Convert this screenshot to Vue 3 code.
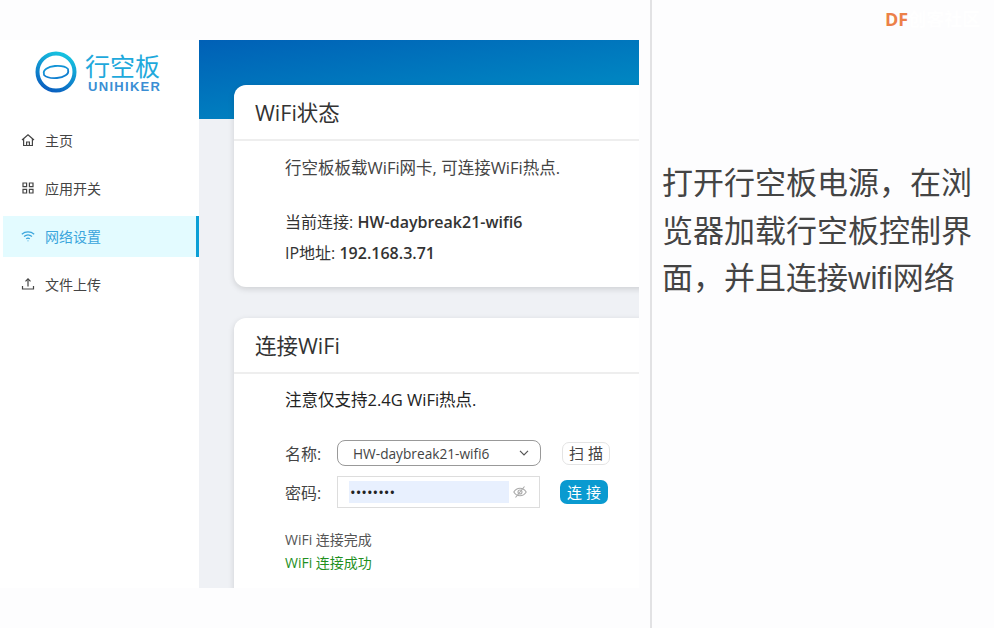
<template>
  <div class="page">
    <div class="app">
      <aside class="sidebar">
        <div class="logo">
          <svg class="logo-mark" width="44" height="44" viewBox="0 0 44 44" fill="none">
            <defs>
              <linearGradient id="ring" x1="0.7" y1="0" x2="0.3" y2="1">
                <stop offset="0" stop-color="#17c3e0" />
                <stop offset="1" stop-color="#0a5fc0" />
              </linearGradient>
            </defs>
            <circle cx="22" cy="22" r="18.5" stroke="url(#ring)" stroke-width="4" />
            <path d="M10 24c-1.500-4 4-7.500 11-8 6-.4 11 .8 13 3" stroke="#1293d6" stroke-width="1.800" stroke-linecap="round" />
            <path d="M34 20c1.500 4-4 7.500-11 8-6 .4-11-.8-13-3" stroke="#0f7fd0" stroke-width="1.800" stroke-linecap="round" />
          </svg>
          <div class="logo-text">
            <span class="logo-cn">行空板</span>
            <span class="logo-en">UNIHIKER</span>
          </div>
        </div>
        <nav class="nav">
          <div v-for="item in navItems" :key="item.label" class="nav-item" :class="{ active: item.active }">
            <svg class="nav-icon" width="14" height="14" viewBox="0 0 14 14" fill="none" stroke="currentColor" stroke-width="1.200">
              <path v-for="d in item.paths" :key="d" :d="d" />
            </svg>
            <span>{{ item.label }}</span>
          </div>
        </nav>
      </aside>

      <main class="main">
        <section class="card status-card">
          <h2 class="card-title">WiFi状态</h2>
          <div class="card-body">
            <p class="intro">行空板板载WiFi网卡, 可连接WiFi热点.</p>
            <p class="info">当前连接: <b>HW-daybreak21-wifi6</b></p>
            <p class="info">IP地址: <b>192.168.3.71</b></p>
          </div>
        </section>

        <section class="card connect-card">
          <h2 class="card-title">连接WiFi</h2>
          <div class="card-body">
            <p class="intro strong">注意仅支持2.4G WiFi热点.</p>
            <div class="form">
              <label>名称:</label>
              <div class="select">
                <span>HW-daybreak21-wifi6</span>
                <svg width="10" height="6" viewBox="0 0 10 6" fill="none" stroke="#555" stroke-width="1.200"><path d="M1 .8l4 4 4-4" /></svg>
              </div>
              <button class="btn">扫 描</button>
              <label>密码:</label>
              <div class="password">
                <span class="dots">••••••••</span>
                <svg width="14" height="14" viewBox="0 0 14 14" fill="none" stroke="#aaa" stroke-width="1.100">
                  <path d="M.8 7C2.300 4.500 4.500 3.200 7 3.200s4.700 1.300 6.200 3.800c-1.500 2.500-3.700 3.800-6.200 3.800S2.300 9.500.8 7z" />
                  <circle cx="7" cy="7" r="2" />
                  <path d="M2.500 12.500L11.500 1.500" />
                </svg>
              </div>
              <button class="btn primary">连 接</button>
            </div>
            <p class="log">WiFi 连接完成</p>
            <p class="log success">WiFi 连接成功</p>
          </div>
        </section>
      </main>
    </div>

    <div class="divider"></div>

    <div class="side">
      <div class="brand">
        <span class="brand-df">DF</span><span class="brand-rest">创客社区</span>
      </div>
      <p class="caption">打开行空板电源，在浏览器加载行空板控制界面，并且连接wifi网络</p>
    </div>
  </div>
</template>

<script setup>
const navItems = [
  {
    label: '主页',
    paths: ['M1 7l6-5.300L13 7', 'M2.600 5.800V12.500h8.800V5.800', 'M5.600 12.500V9h2.800v3.500']
  },
  {
    label: '应用开关',
    paths: [
      'M2 2h3.600v3.600H2z',
      'M8.400 2H12v3.600H8.400z',
      'M2 8.400h3.600V12H2z',
      'M8.400 8.400H12V12H8.400z'
    ]
  },
  {
    label: '网络设置',
    active: true,
    paths: ['M.8 5.200c3.600-3 8.800-3 12.400 0', 'M3 7.500c2.400-2 5.600-2 8 0', 'M5.200 9.700c1.100-.8 2.500-.8 3.600 0', 'M7 11.400v.8']
  },
  {
    label: '文件上传',
    paths: ['M1.500 9v3h11V9', 'M7 9.500V2', 'M4.500 4.300L7 1.800l2.500 2.500']
  }
];
</script>

<style>
html,
body {
  margin: 0;
  background: #fdfdfe;
}
</style>

<style scoped>
.page {
  width: 994px;
  height: 628px;
  display: flex;
  overflow: hidden;
  background: #fdfdfe;
  font-family: "Open Sans", "Noto Sans CJK SC", sans-serif;
  color: #333;
}

.app {
  width: 639px;
  height: 548px;
  margin-top: 40px;
  display: flex;
  flex: none;
}

.sidebar {
  width: 199px;
  flex: none;
  background: #fff;
  padding-left: 3px;
  box-sizing: border-box;
}

.logo {
  height: 62px;
  padding: 10px 0 0 31px;
  display: flex;
  gap: 7px;
}

.logo-mark {
  flex: none;
}

.logo-text {
  display: flex;
  flex-direction: column;
  margin-top: 1px;
}

.logo-cn {
  font-family: "Noto Sans CJK SC", sans-serif;
  font-size: 25px;
  line-height: 28px;
  font-weight: 400;
  color: #1ea9dc;
}

.logo-en {
  font-family: "Liberation Sans", sans-serif;
  font-size: 13px;
  line-height: 15px;
  font-weight: 700;
  letter-spacing: 1.300px;
  margin-left: 3px;
  color: #3a8ed4;
}

.nav {
  margin-top: 7px;
  display: flex;
  flex-direction: column;
  gap: 7.300px;
}

.nav-item {
  height: 41px;
  display: flex;
  align-items: center;
  gap: 10px;
  padding-left: 18px;
  box-sizing: border-box;
  font-size: 14px;
  color: #444;
}

.nav-item.active {
  background: #e3fbff;
  color: #3aa5dc;
  border-right: 3px solid #0a9fd6;
}

.nav-icon {
  flex: none;
}

.main {
  flex: 1;
  min-width: 0;
  overflow: hidden;
  padding: 45px 0 0 35px;
  background: linear-gradient(172deg, #0060b6, #0094c6) top / 100% 79px no-repeat, #eff1f5;
}

.card {
  width: 460px;
  background: #fff;
  border-radius: 12px;
  box-shadow: 0 2px 6px rgba(0, 0, 0, 0.14);
}

.status-card {
  height: 202px;
}

.connect-card {
  margin-top: 31px;
  height: 320px;
}

.card-title {
  margin: 0;
  height: 54px;
  line-height: 56px;
  padding-left: 21px;
  font-size: 21.500px;
  font-weight: 400;
  color: #333;
  border-bottom: 2px solid #eeeeee;
}

.card-body {
  padding: 14px 0 0 51px;
  font-size: 16px;
}

.status-card .card-body {
  padding-top: 15px;
}

.card-body p {
  margin: 0;
}

.intro {
  line-height: 24px;
  color: #444;
  font-size: 16.500px;
}

.intro.strong {
  color: #222;
}

.info {
  line-height: 31px;
  color: #333;
  font-size: 16px;
}

.intro + .info {
  margin-top: 27px;
}

.info b {
  font-weight: 600;
}

.form {
  display: grid;
  grid-template-columns: 52px 204px auto;
  grid-template-rows: 26px 32px;
  row-gap: 10px;
  align-items: center;
  margin-top: 28px;
}

.form label {
  font-size: 16px;
  color: #444;
}

.select {
  height: 26px;
  box-sizing: border-box;
  border: 1px solid #999;
  border-radius: 8px;
  display: flex;
  align-items: center;
  justify-content: space-between;
  padding: 0 11px 0 15px;
  font-size: 13.700px;
  color: #444;
}

.password {
  height: 32px;
  width: 203px;
  box-sizing: border-box;
  border: 1px solid #ddd;
  display: flex;
  align-items: center;
  gap: 4px;
  padding-left: 11px;
}

.dots {
  width: 160px;
  height: 22px;
  line-height: 22px;
  background: #e8f0fe;
  font-size: 15px;
  letter-spacing: 0;
  color: #222;
  padding-left: 1px;
  box-sizing: border-box;
}

.btn {
  justify-self: start;
  width: 48px;
  height: 23px;
  margin-left: 21px;
  padding: 0;
  border: 1px solid #e4e4e4;
  border-radius: 7px;
  background: #fff;
  color: #444;
  font-family: inherit;
  font-size: 15px;
  line-height: 1;
}

.btn.primary {
  margin-left: 19px;
  height: 24px;
  border: none;
  background: #0a9ad0;
  color: #fff;
}

.log {
  font-size: 14px;
  line-height: 23px;
  color: #555;
}

.form + .log {
  margin-top: 20px;
}

.log.success {
  color: #1f901f;
}

.divider {
  width: 2px;
  flex: none;
  margin-left: 11px;
  background: #e2e2e4;
}

.side {
  flex: 1;
  min-width: 0;
  padding-left: 10px;
}

.brand {
  height: 160px;
  padding: 9px 0 0 223px;
  box-sizing: border-box;
  font-size: 18px;
  line-height: 20px;
  font-weight: 700;
  white-space: nowrap;
}

.brand-df {
  color: #ec8048;
}

.brand-rest {
  color: #fff;
}

.caption {
  margin: 0;
  width: 312px;
  font-family: "Liberation Sans", "Noto Sans CJK SC", sans-serif;
  font-size: 31px;
  line-height: 47.500px;
  color: #444;
}
</style>
